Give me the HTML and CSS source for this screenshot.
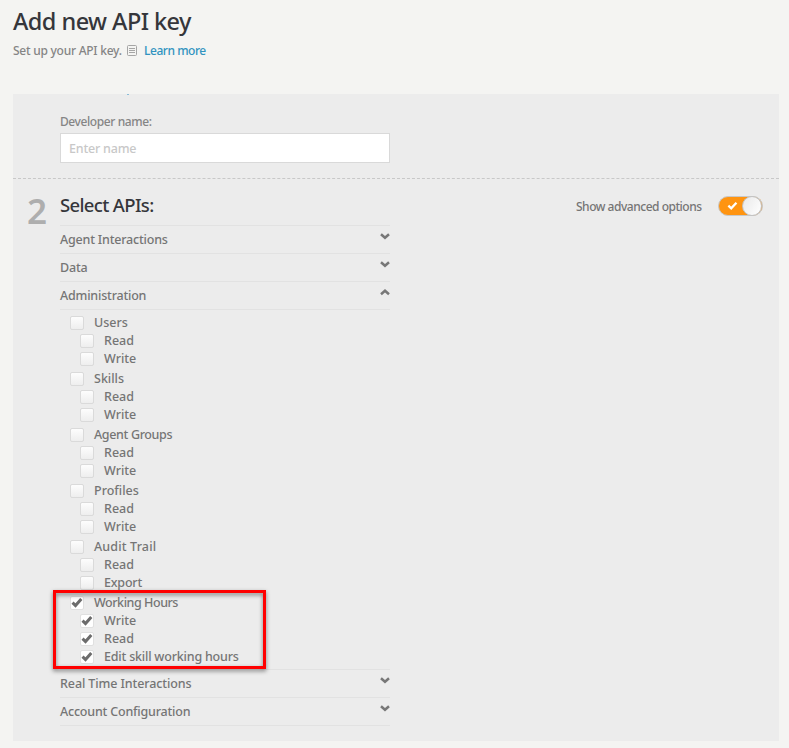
FILE: index.html
```html
<!DOCTYPE html>
<html lang="en">
<head>
<meta charset="utf-8">
<title>Add new API key</title>
<link rel="stylesheet" href="styles.css">
</head>
<body>
<svg width="0" height="0" class="defs">
  <symbol id="down" viewBox="0 0 10 7"><path d="M1 1.3 5 4.8 9 1.3" fill="none" stroke="#777" stroke-width="2.5"/></symbol>
  <symbol id="up" viewBox="0 0 10 7"><path d="M1 5.2 5 1.7 9 5.2" fill="none" stroke="#777" stroke-width="2.5"/></symbol>
  <symbol id="tick" viewBox="0 0 12 12"><path d="M1.5 5.7 4.5 8.6 10.3 2" fill="none" stroke="#6c6c6c" stroke-width="3"/></symbol>
</svg>
<header class="head">
  <h1>Add new API key</h1>
  <p class="intro"><span class="setup">Set up your API key.</span>
    <svg class="doc" width="10" height="11" viewBox="0 0 10 11"><rect x=".5" y=".5" width="9" height="10" rx="1" fill="none" stroke="#a5a5a5"/><path d="M2 3.5h6M2 5.5h6M2 7.5h6" stroke="#a5a5a5"/></svg>
    <a class="more">Learn more</a></p>
</header>
<main class="panel">
  <i class="speck"></i>
  <section class="developer">
    <label for="dev">Developer name:</label>
    <input id="dev" type="text" placeholder="Enter name">
  </section>
  <section class="apis">
    <div class="number">2</div>
    <div class="body">
      <h2>Select APIs:</h2>
      <div class="bar"><span class="tight">Agent Interactions</span><svg><use href="#down"/></svg></div>
      <div class="bar"><span class="tight">Data</span><svg><use href="#down"/></svg></div>
      <div class="bar"><span class="tight">Administration</span><svg><use href="#up"/></svg></div>
      <div class="groups">
        <div class="group">
          <div class="item"><i class="box"></i><span>Users</span></div>
          <div class="item sub"><i class="box"></i><span>Read</span></div>
          <div class="item sub"><i class="box"></i><span>Write</span></div>
        </div>
        <div class="group">
          <div class="item"><i class="box"></i><span>Skills</span></div>
          <div class="item sub"><i class="box"></i><span>Read</span></div>
          <div class="item sub"><i class="box"></i><span>Write</span></div>
        </div>
        <div class="group">
          <div class="item"><i class="box"></i><span class="tighter">Agent Groups</span></div>
          <div class="item sub"><i class="box"></i><span>Read</span></div>
          <div class="item sub"><i class="box"></i><span>Write</span></div>
        </div>
        <div class="group">
          <div class="item"><i class="box"></i><span>Profiles</span></div>
          <div class="item sub"><i class="box"></i><span>Read</span></div>
          <div class="item sub"><i class="box"></i><span>Write</span></div>
        </div>
        <div class="group">
          <div class="item"><i class="box"></i><span class="loose">Audit Trail</span></div>
          <div class="item sub"><i class="box"></i><span>Read</span></div>
          <div class="item sub"><i class="box"></i><span class="tight">Export</span></div>
        </div>
        <div class="group marked">
          <div class="item"><i class="box on"><svg><use href="#tick"/></svg></i><span class="tightest">Working Hours</span></div>
          <div class="item sub"><i class="box on"><svg><use href="#tick"/></svg></i><span>Write</span></div>
          <div class="item sub"><i class="box on"><svg><use href="#tick"/></svg></i><span>Read</span></div>
          <div class="item sub"><i class="box on"><svg><use href="#tick"/></svg></i><span class="tight">Edit skill working hours</span></div>
          <div class="highlight"></div>
        </div>
      </div>
      <div class="bar"><span class="snug">Real Time Interactions</span><svg><use href="#down"/></svg></div>
      <div class="bar last"><span class="tight">Account Configuration</span><svg><use href="#down"/></svg></div>
    </div>
    <div class="advanced">
      <span>Show advanced options</span>
      <div class="toggle"><svg width="12" height="10" viewBox="0 0 12 10"><path d="M1.5 4.6 4.6 7.6 10.3 1.4" fill="none" stroke="#fff" stroke-width="2.5"/></svg><i class="knob"></i></div>
    </div>
  </section>
</main>
</body>
</html>
```
FILE: styles.css
```css
* { box-sizing: border-box; }
body {
  margin: 0;
  height: 748px;
  overflow: hidden;
  background: #f4f4f2;
  color: #757575;
  font: 500 12.5px/18px "Trebuchet MS", "Noto Sans", sans-serif;
}
.defs { position: absolute; }
.head { height: 94px; padding: 6px 13px 0; }
h1 { margin: 0; font-size: 23.5px; line-height: 30px; font-weight: 500; color: #35363b; letter-spacing: -0.55px; }
.intro { display: flex; align-items: center; margin: 6px 0 0; font-size: 12px; color: #858585; }
.setup { width: 114px; white-space: nowrap; letter-spacing: -0.25px; }
.doc { margin-right: 7px; position: relative; top: -1px; }
.more { color: #3093c0; letter-spacing: -0.45px; }
.panel { position: relative; width: 766px; height: 647px; margin-left: 13px; background: #ececec; }
.speck { position: absolute; left: 114px; top: 0; width: 2px; height: 1px; background: #8bbdd8; }
.developer { height: 85px; padding: 19px 0 0 47px; border-bottom: 1px dashed #c8c8c8; }
label { display: block; height: 20px; font-size: 12px; color: #858585; letter-spacing: -0.4px; }
input {
  display: block;
  width: 330px;
  height: 30px;
  padding: 0 8px;
  border: 1px solid #d9d9d9;
  background: #fff;
  font: inherit;
  letter-spacing: -0.2px;
}
input::placeholder { color: #c8c8c8; opacity: 1; }
.apis { display: flex; padding-right: 16px; }
.number { width: 47px; padding: 14px 0 0 14px; font-size: 35px; line-height: 36px; font-weight: 600; color: #aeaeae; }
.body { width: 330px; }
h2 { margin: 0; height: 46px; padding-top: 13px; font-size: 18.5px; line-height: 26px; font-weight: 500; color: #35363b; letter-spacing: -0.65px; }
.bar { display: flex; justify-content: space-between; height: 28px; padding-top: 5px; border-top: 1px solid #e2e2e2; }
.bar svg { width: 10px; height: 7px; margin-top: 2px; }
.last { height: 29px; border-bottom: 1px solid #e2e2e2; }
.snug { letter-spacing: -0.1px; }
.tight { letter-spacing: -0.2px; }
.tighter { letter-spacing: -0.35px; }
.tightest { letter-spacing: -0.45px; }
.loose { letter-spacing: 0.15px; }
.groups { padding: 4px 0 3px; border-top: 1px solid #e2e2e2; }
.group { margin-bottom: 2px; }
.item { display: flex; align-items: center; height: 18px; padding-left: 10px; gap: 10px; }
.sub { padding-left: 20px; }
.box { width: 14px; height: 14px; border: 1px solid #dadada; border-radius: 2px; background: linear-gradient(#fdfdfd, #eee); }
.on { background: #fff; border-color: #e0e0e0; }
.on svg { display: block; width: 12px; height: 12px; }
.marked { position: relative; margin-bottom: 0; }
.highlight {
  position: absolute;
  left: -7px;
  top: -4px;
  width: 213px;
  height: 79px;
  border: 3px solid #f00;
  filter: drop-shadow(0 2px 2px rgba(0, 0, 0, .5));
}
.advanced { display: flex; align-items: center; height: 24px; margin: 15px 0 0 auto; }
.advanced > span { font-size: 12px; width: 142px; padding-top: 2px; white-space: nowrap; letter-spacing: -0.48px; }
.toggle { display: flex; align-items: center; width: 45px; height: 20px; padding-left: 8px; border: 1px solid #c8c8c8; border-radius: 10px; background: #ff9410; }
.knob { flex: none; width: 20px; height: 20px; margin-left: 4px; border: 1px solid #c4c4c4; border-radius: 50%; background: linear-gradient(120deg, #e9e9e9, #fff); }
```
